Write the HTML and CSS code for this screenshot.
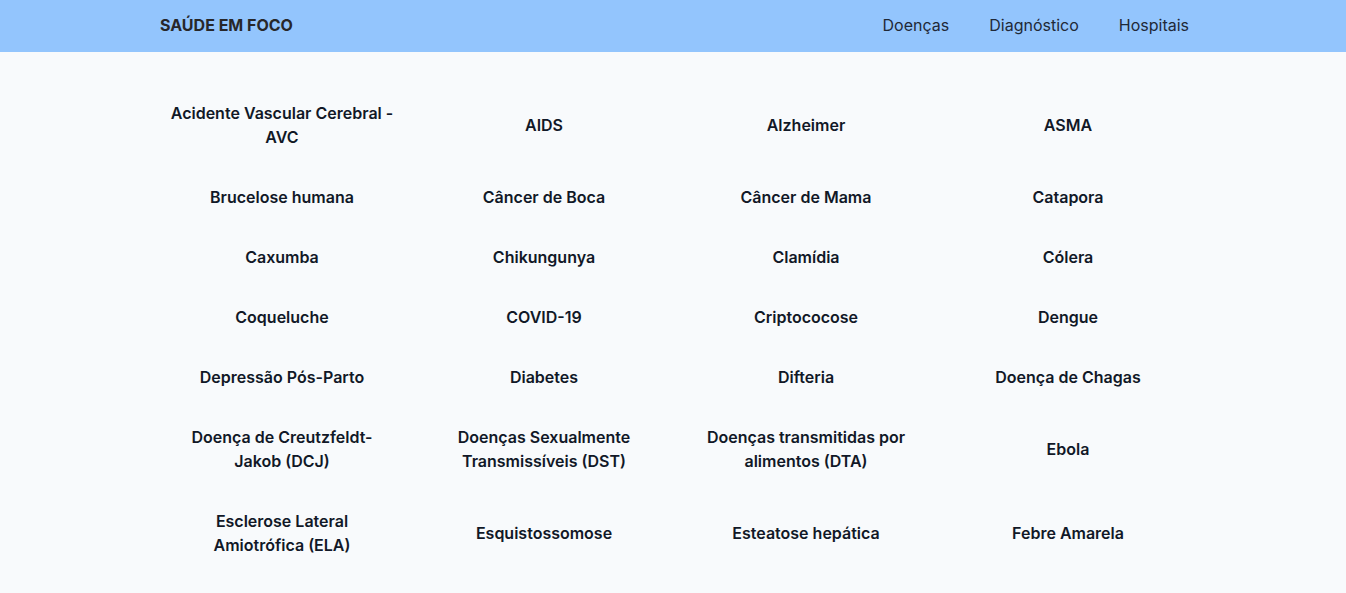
FILE: index.html
```html
<!DOCTYPE html>
<html lang="pt-BR">
<head>
<meta charset="utf-8">
<title>Saúde em Foco</title>
<link rel="stylesheet" href="styles.css">
</head>
<body>
<header class="topbar">
  <div class="topbar-inner">
    <a class="brand" href="#">SAÚDE EM FOCO</a>
    <nav class="nav">
      <a href="#">Doenças</a>
      <a href="#">Diagnóstico</a>
      <a href="#">Hospitais</a>
    </nav>
  </div>
</header>
<main class="main">
  <ul class="grid">
    <li class="cell"><a href="#">Acidente Vascular Cerebral - AVC</a></li>
    <li class="cell"><a href="#">AIDS</a></li>
    <li class="cell"><a href="#">Alzheimer</a></li>
    <li class="cell"><a href="#">ASMA</a></li>
    <li class="cell"><a href="#">Brucelose humana</a></li>
    <li class="cell"><a href="#">Câncer de Boca</a></li>
    <li class="cell"><a href="#">Câncer de Mama</a></li>
    <li class="cell"><a href="#">Catapora</a></li>
    <li class="cell"><a href="#">Caxumba</a></li>
    <li class="cell"><a href="#">Chikungunya</a></li>
    <li class="cell"><a href="#">Clamídia</a></li>
    <li class="cell"><a href="#">Cólera</a></li>
    <li class="cell"><a href="#">Coqueluche</a></li>
    <li class="cell"><a href="#">COVID-19</a></li>
    <li class="cell"><a href="#">Criptococose</a></li>
    <li class="cell"><a href="#">Dengue</a></li>
    <li class="cell"><a href="#">Depressão Pós-Parto</a></li>
    <li class="cell"><a href="#">Diabetes</a></li>
    <li class="cell"><a href="#">Difteria</a></li>
    <li class="cell"><a href="#">Doença de Chagas</a></li>
    <li class="cell"><a href="#">Doença de Creutzfeldt-Jakob (DCJ)</a></li>
    <li class="cell"><a href="#">Doenças Sexualmente Transmissíveis (DST)</a></li>
    <li class="cell"><a href="#">Doenças transmitidas por alimentos (DTA)</a></li>
    <li class="cell"><a href="#">Ebola</a></li>
    <li class="cell"><a href="#">Esclerose Lateral Amiotrófica (ELA)</a></li>
    <li class="cell"><a href="#">Esquistossomose</a></li>
    <li class="cell"><a href="#">Esteatose hepática</a></li>
    <li class="cell"><a href="#">Febre Amarela</a></li>
  </ul>
</main>
</body>
</html>
```

FILE: styles.css
```css
* { box-sizing: border-box; }
html, body { margin: 0; padding: 0; }
body {
  font-family: Inter, "Noto Sans", sans-serif;
  background: #f8fafc;
  color: #111827;
  font-size: 16px;
  line-height: 24px;
}
a { color: inherit; text-decoration: none; }

.topbar {
  background: #93c5fd;
  height: 52px;
}
.topbar-inner {
  max-width: 1048px;
  margin: 0 auto;
  height: 100%;
  display: flex;
  align-items: center;
  justify-content: space-between;
  padding: 0 8px 2px 11px;
}
.brand {
  font-weight: 700;
  font-size: 16px;
  color: #27272a;
}
.nav {
  display: flex;
  gap: 40px;
}
.nav a {
  color: #1f2937;
  font-size: 16px;
}

.main {
  max-width: 1052px;
  margin: 0 auto;
  padding: 31px 0 0 4px;
}
.grid {
  list-style: none;
  margin: 0;
  padding: 0;
  display: grid;
  grid-template-columns: repeat(4, 1fr);
}
.cell {
  padding: 18px 18px;
  display: flex;
  align-items: center;
  justify-content: center;
  text-align: center;
  font-weight: 600;
}
```
